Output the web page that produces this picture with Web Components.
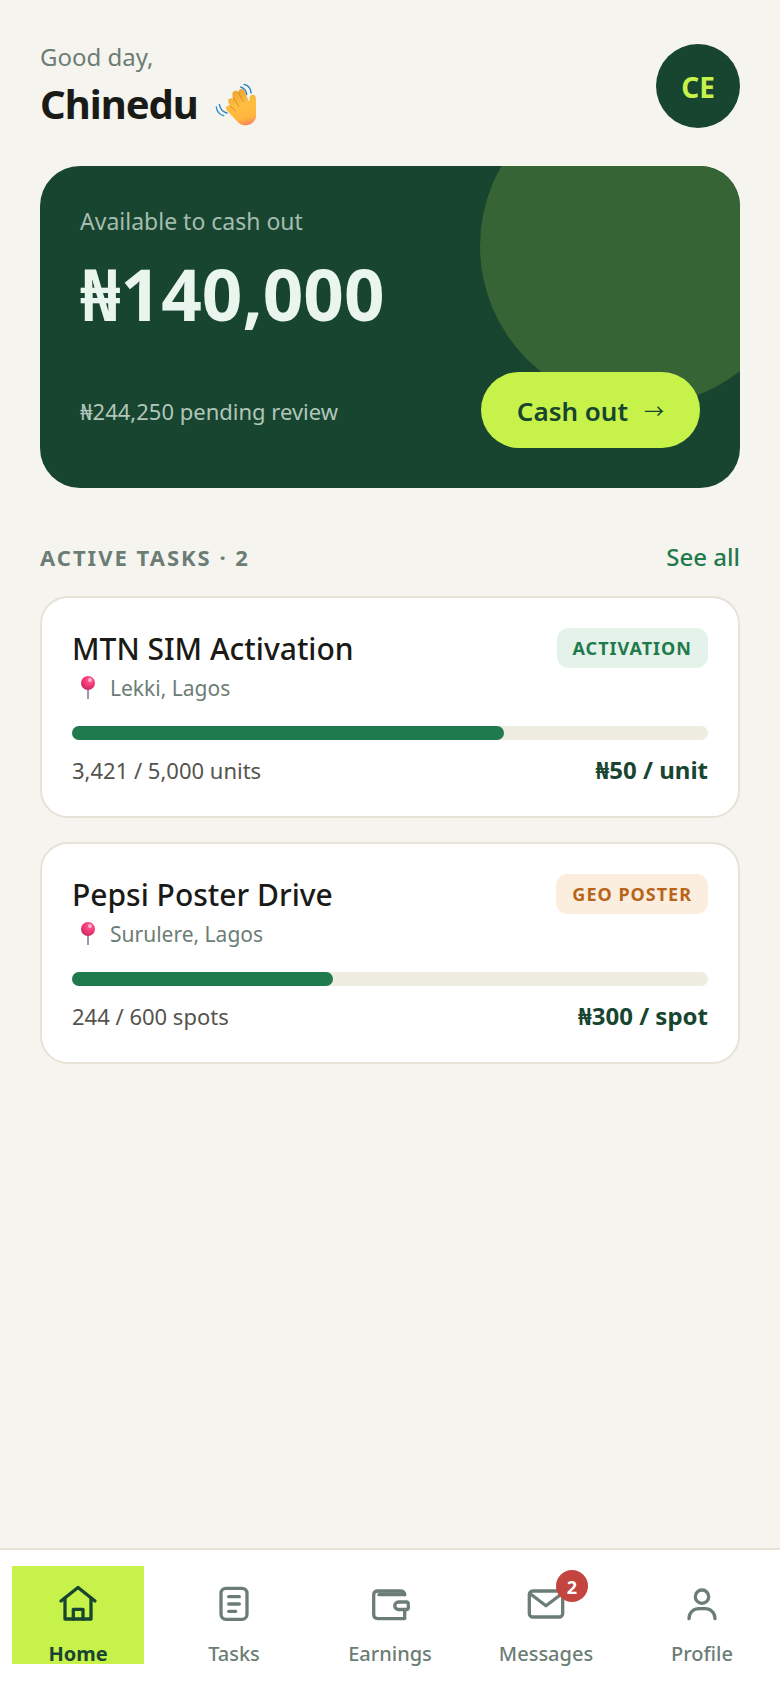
<!DOCTYPE html>
<html lang="en">
<head>
<meta charset="utf-8">
<meta name="viewport" content="width=device-width, initial-scale=1">
<title>Home</title>
<style>
  :root {
    --paper: #f6f4ef;
    --line: #e6e2d8;
    --ink: #1a1a17;
    --muted: #6b7d75;
    --forest: #174530;
    --green: #1f7a4d;
    --lime: #c6f24a;
  }
  body {
    margin: 0;
    background: var(--paper);
    color: var(--ink);
    font-family: "Noto Sans", "Open Sans", sans-serif;
  }
</style>
</head>
<body>
<agent-app>
  <greeting-header slot="header" initials="CE">
    <span slot="greeting">Good day,</span>
    <span slot="name">Chinedu</span>
  </greeting-header>

  <balance-card>
    <span slot="label">Available to cash out</span>
    <span slot="amount">₦140,000</span>
    <span slot="pending">₦244,250 pending review</span>
    <span slot="action">Cash out</span>
  </balance-card>

  <task-section>
    <span slot="heading">ACTIVE TASKS · 2</span>
    <span slot="link">See all</span>
    <task-card value="68">
      <span slot="title">MTN SIM Activation</span>
      <task-tag slot="tag">ACTIVATION</task-tag>
      <span slot="place">Lekki, Lagos</span>
      <span slot="count">3,421 / 5,000 units</span>
      <span slot="price">₦50 / unit</span>
    </task-card>
    <task-card value="41">
      <span slot="title">Pepsi Poster Drive</span>
      <task-tag slot="tag" tone="orange">GEO POSTER</task-tag>
      <span slot="place">Surulere, Lagos</span>
      <span slot="count">244 / 600 spots</span>
      <span slot="price">₦300 / spot</span>
    </task-card>
  </task-section>

  <tab-bar slot="nav">
    <tab-item icon="home" href="#home" active>Home</tab-item>
    <tab-item icon="tasks" href="#tasks">Tasks</tab-item>
    <tab-item icon="wallet" href="#earnings">Earnings</tab-item>
    <tab-item icon="mail" href="#messages" badge="2">Messages</tab-item>
    <tab-item icon="person" href="#profile">Profile</tab-item>
  </tab-bar>
</agent-app>

<script>
class BaseElement extends HTMLElement {
  connectedCallback() {
    if (this.shadowRoot) return;
    this.attachShadow({ mode: 'open' }).innerHTML =
      '<style>*{box-sizing:border-box}' + this.styles() + '</style>' + this.markup();
  }
}

customElements.define('agent-app', class extends BaseElement {
  styles() {
    return `
      :host { display: flex; flex-direction: column; min-height: 100vh; }
      main { flex: 1; padding: 0 40px 40px; }
      ::slotted([slot="nav"]) { position: sticky; bottom: 0; }`;
  }
  markup() {
    return `<slot name="header"></slot><main><slot></slot></main><slot name="nav"></slot>`;
  }
});

customElements.define('greeting-header', class extends BaseElement {
  styles() {
    return `
      :host { display: block; }
      header { display: flex; align-items: center; justify-content: space-between; padding: 40px 40px 34px; }
      .text { display: flex; flex-direction: column; gap: 2px; }
      p { margin: 0; font-size: 24px; line-height: 34px; color: var(--muted); }
      h1 { display: flex; align-items: center; gap: 16px; margin: 0; font-size: 40px; line-height: 56px; font-weight: 700; letter-spacing: -1px; }
      svg { width: 44px; height: 46px; }
      button { width: 84px; height: 84px; padding: 2px 0 0; border: 0; border-radius: 50%; background: var(--forest); color: var(--lime); font: 700 28px/32px "Noto Sans", sans-serif; }`;
  }
  markup() {
    return `
      <header>
        <div class="text">
          <p><slot name="greeting"></slot></p>
          <h1><slot name="name"></slot>
            <svg viewBox="0 0 132 138" role="img" aria-label="Waving hand" fill="none" stroke-linecap="round" stroke-linejoin="round">
              <defs>
                <linearGradient id="skin" x1="70" y1="30" x2="95" y2="132" gradientUnits="userSpaceOnUse">
                  <stop offset="0" stop-color="#f0a636"/><stop offset=".4" stop-color="#ffbe40"/><stop offset=".8" stop-color="#ffb53f"/><stop offset="1" stop-color="#f68a58"/>
                </linearGradient>
              </defs>
              <g stroke="#2585c9" stroke-width="4">
                <path d="M90 10q20 4 21 26"/><path d="M80 18q16 5 18 23"/>
                <path d="M7 78q3 22 22 26"/><path d="M16 70q4 21 23 26"/>
              </g>
              <path fill="url(#skin)" d="M55 41C54 29 68 26 73 34C73 22 87 20 92 31L103 58C106 63 108 59 107 51C107 39 124 37 125 49C127 61 126 73 126 86V107C123 124 108 133 93 133C82 133 74 127 66 118L38 88C32 80 39 71 48 74L44 66C39 56 49 47 57 55Z"/>
              <g stroke="#d98a2b" stroke-width="3">
                <path d="M73 34L88 62"/><path d="M57 50L75 76"/><path d="M48 74L64 90"/>
              </g>
            </svg>
          </h1>
        </div>
        <button type="button" aria-label="Account">${this.getAttribute('initials')}</button>
      </header>`;
  }
});

customElements.define('balance-card', class extends BaseElement {
  styles() {
    return `
      :host { display: block; }
      section { position: relative; overflow: hidden; padding: 40px; border-radius: 40px; background: var(--forest); color: #e9f5ed; }
      .glow { position: absolute; top: -80px; right: -60px; width: 320px; height: 320px; border-radius: 50%; background: #366434; }
      .content { position: relative; }
      p { margin: 0; font-size: 22px; line-height: 32px; color: #b1c5b9; }
      .label { font-size: 23px; line-height: 30px; color: #a5bdae; }
      .amount { margin: 16px 0 36px; font-size: 71px; line-height: 84px; font-weight: 700; color: #e9f5ed; }
      .row { display: flex; align-items: center; justify-content: space-between; gap: 16px; }
      .row p { padding-top: 2px; }
      button { display: flex; align-items: center; justify-content: center; gap: 16px; height: 76px; padding: 2px 36px 0; border: 0; border-radius: 38px; background: var(--lime); color: var(--forest); font: 600 26px/32px "Noto Sans", sans-serif; }
      .arrow { font: 400 20px/32px "Noto Sans CJK SC", sans-serif; }`;
  }
  markup() {
    return `
      <section>
        <div class="glow"></div>
        <div class="content">
          <p class="label"><slot name="label"></slot></p>
          <p class="amount"><slot name="amount"></slot></p>
          <div class="row">
            <p><slot name="pending"></slot></p>
            <button type="button"><slot name="action"></slot><span class="arrow">→</span></button>
          </div>
        </div>
      </section>`;
  }
});

customElements.define('task-section', class extends BaseElement {
  styles() {
    return `
      :host { display: block; margin-top: 52px; }
      header { display: flex; align-items: baseline; justify-content: space-between; margin-bottom: 22px; }
      h2 { margin: 0; font-size: 22px; line-height: 34px; font-weight: 700; letter-spacing: 2px; color: var(--muted); }
      a { font-size: 24px; line-height: 34px; font-weight: 500; color: var(--green); text-decoration: none; }
      .list { display: flex; flex-direction: column; gap: 24px; }`;
  }
  markup() {
    return `
      <header><h2><slot name="heading"></slot></h2><a href="#tasks"><slot name="link"></slot></a></header>
      <div class="list"><slot></slot></div>`;
  }
});

customElements.define('task-tag', class extends BaseElement {
  styles() {
    const orange = this.getAttribute('tone') === 'orange';
    return `
      :host { display: block; padding: 0 16px; border-radius: 12px; font-size: 18px; line-height: 40px; font-weight: 700; letter-spacing: 1px; white-space: nowrap;
        background: ${orange ? '#fbeede' : '#e5f2ea'}; color: ${orange ? '#b8651b' : 'var(--green)'}; }`;
  }
  markup() { return `<slot></slot>`; }
});

customElements.define('task-card', class extends BaseElement {
  styles() {
    return `
      :host { display: block; }
      article { padding: 30px; border: 2px solid var(--line); border-radius: 28px; background: #fff; }
      .row { display: flex; align-items: baseline; justify-content: space-between; gap: 16px; }
      .top { align-items: flex-start; }
      h3 { margin: 0; font-size: 30px; line-height: 42px; font-weight: 500; }
      .place { display: flex; align-items: center; gap: 6px; margin: 2px 0 22px; font-size: 21px; line-height: 32px; color: var(--muted); }
      svg { width: 32px; height: 32px; }
      .track { height: 14px; margin-bottom: 14px; border-radius: 7px; background: #efece1; }
      .fill { height: 100%; border-radius: 7px; background: var(--green); }
      .count { font-size: 22px; line-height: 32px; color: #55534d; }
      .price { font-size: 24px; line-height: 32px; font-weight: 700; color: var(--forest); }`;
  }
  markup() {
    const value = this.getAttribute('value');
    return `
      <article>
        <div class="row top"><h3><slot name="title"></slot></h3><slot name="tag"></slot></div>
        <p class="place">
          <svg viewBox="0 0 32 32" aria-hidden="true">
            <defs><radialGradient id="ball" cx=".62" cy=".3" r=".8"><stop offset="0" stop-color="#ff5c92"/><stop offset=".5" stop-color="#f2397a"/><stop offset="1" stop-color="#b52a55"/></radialGradient></defs>
            <path d="M16 16V27" stroke="#a394b5" stroke-width="2"/>
            <circle cx="16" cy="11" r="7" fill="url(#ball)"/>
            <circle cx="18" cy="8" r="2" fill="#ffb5cf"/>
          </svg>
          <slot name="place"></slot>
        </p>
        <div class="track" role="progressbar" aria-label="Progress" aria-valuenow="${value}" aria-valuemin="0" aria-valuemax="100"><div class="fill" style="width:${value}%"></div></div>
        <div class="row"><span class="count"><slot name="count"></slot></span><span class="price"><slot name="price"></slot></span></div>
      </article>`;
  }
});

customElements.define('tab-bar', class extends BaseElement {
  styles() {
    return `
      :host { display: block; }
      nav { display: grid; grid-template-columns: repeat(5, 1fr); gap: 24px; padding: 16px 12px 24px; border-top: 2px solid var(--line); background: #fff; }`;
  }
  markup() { return `<nav aria-label="Main"><slot></slot></nav>`; }
});

const ICONS = {
  home: '<path d="M5 19L22 5.5L39 19"/><path d="M9 16V37H35V16"/><path d="M17.3 37V27.3H27V37"/>',
  tasks: '<rect x="9" y="6.3" width="26" height="31" rx="5"/><path d="M16.7 14.7H27.3M16.7 22H27.3M16.7 29.3H23.7"/>',
  wallet: '<path d="M36.7 12.7C36.7 10.5 35 9 32.5 9H10Q5.7 9 5.7 13V32.6Q5.7 36.6 10 36.6H36.7V27.5"/><path d="M11 10.8H34" stroke-opacity=".6" stroke-width="2"/><path d="M11 12.7H36.7"/><path d="M30.5 20H38.3Q40.3 20 40.3 22V25.5Q40.3 27.5 38.3 27.5H30.5A3.75 3.75 0 0 1 30.5 20Z"/>',
  mail: '<rect x="5.3" y="9" width="33.4" height="26" rx="3.5"/><path d="M6.5 12L22 23.7L37.5 12"/>',
  person: '<circle cx="22" cy="14.7" r="6.7"/><path d="M9 36.7C9 30.5 13.5 26.7 19 26.7H25C30.5 26.7 35 30.5 35 36.7"/>'
};

customElements.define('tab-item', class extends BaseElement {
  styles() {
    const active = this.hasAttribute('active');
    return `
      :host { display: block; min-width: 0; }
      a { display: flex; flex-direction: column; align-items: center; gap: 18px; padding-top: 16px; text-decoration: none; font-size: 20px; line-height: 20px; white-space: nowrap;
        font-weight: ${active ? 700 : 500}; color: ${active ? 'var(--forest)' : 'var(--muted)'}; background: ${active ? 'var(--lime)' : 'none'}; }
      .icon { position: relative; width: 44px; height: 44px; }
      svg { display: block; width: 44px; height: 44px; }
      .badge { position: absolute; top: -12px; right: -20px; width: 32px; height: 32px; border-radius: 50%; background: #c4443f; color: #fff; font-size: 18px; line-height: 34px; font-weight: 700; text-align: center; }`;
  }
  markup() {
    const badge = this.getAttribute('badge');
    return `
      <a href="${this.getAttribute('href')}">
        <span class="icon">
          <svg viewBox="0 0 44 44" fill="none" stroke="currentColor" stroke-width="3.3" stroke-linecap="round" stroke-linejoin="round" aria-hidden="true">${ICONS[this.getAttribute('icon')]}</svg>
          ${badge ? `<span class="badge">${badge}</span>` : ''}
        </span>
        <span><slot></slot></span>
      </a>`;
  }
});
</script>
</body>
</html>
